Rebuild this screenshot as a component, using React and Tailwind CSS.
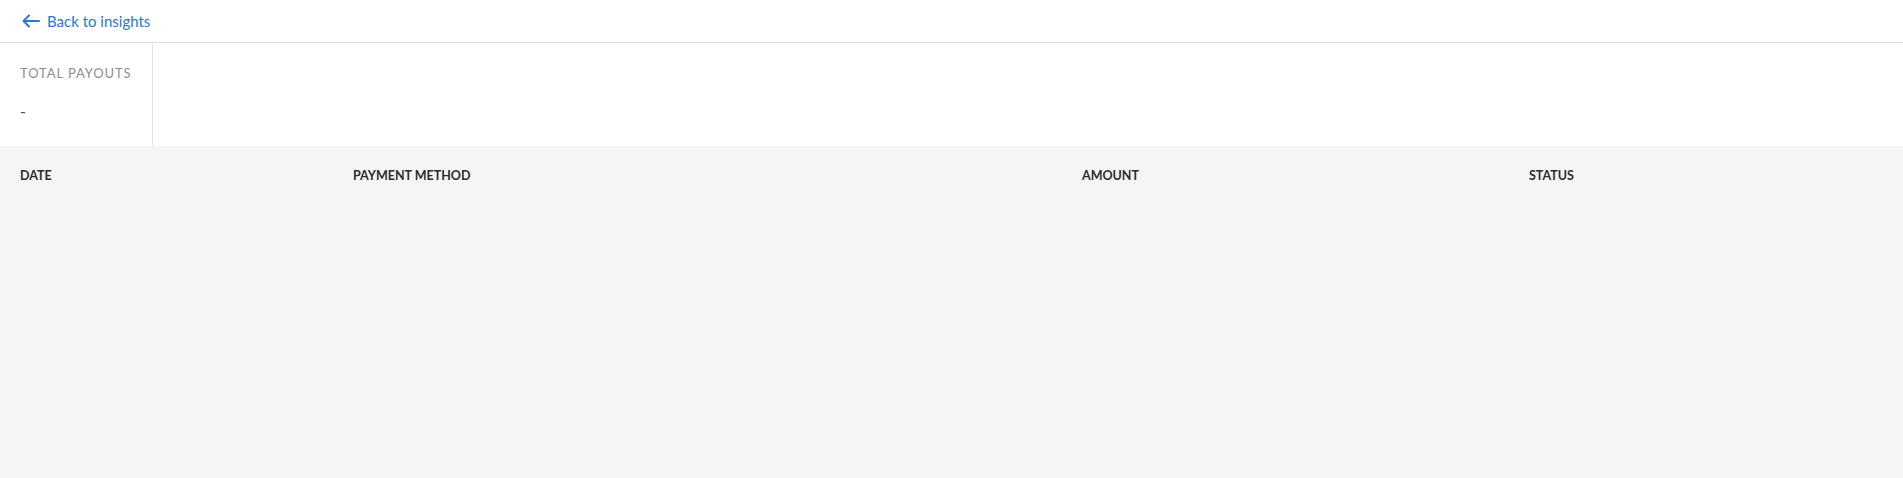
export default function App() {
  return (
    <div className="w-full h-[478px] flex flex-col bg-white font-['Lato',sans-serif]">
      {/* top bar */}
      <div className="h-[43px] flex items-center px-[22px] border-b border-[#e1e1e1]">
        <a href="#" className="flex items-center gap-[7px] text-[#2a75d6] text-[15px]">
          <svg width="18" height="14" viewBox="0 0 18 14" fill="none" stroke="currentColor" strokeWidth="2" strokeLinecap="round" strokeLinejoin="round">
            <path d="M17 7H2" />
            <path d="M7 1.5L1.5 7L7 12.5" />
          </svg>
          <span>Back to insights</span>
        </a>
      </div>

      {/* summary */}
      <div className="h-[103px] flex">
        <div className="w-[153px] shrink-0 border-r border-[#e1e1e1] pl-5 pt-[24px]">
          <div className="whitespace-nowrap text-[13px] tracking-[0.07em] text-[#8e8e8e] leading-none">TOTAL PAYOUTS</div>
          <div className="mt-[23px] text-[16px] text-[#4b4b4b] leading-none">-</div>
        </div>
        <div className="flex-1" />
      </div>

      {/* table */}
      <div className="flex-1 bg-[#f5f5f5]">
        <div className="grid grid-cols-[333px_729px_447px_1fr] px-5 pt-[24px] text-[12.5px] font-bold text-[#2c2c2c] leading-none">
          <div>DATE</div>
          <div>PAYMENT METHOD</div>
          <div>AMOUNT</div>
          <div>STATUS</div>
        </div>
      </div>
    </div>
  );
}
